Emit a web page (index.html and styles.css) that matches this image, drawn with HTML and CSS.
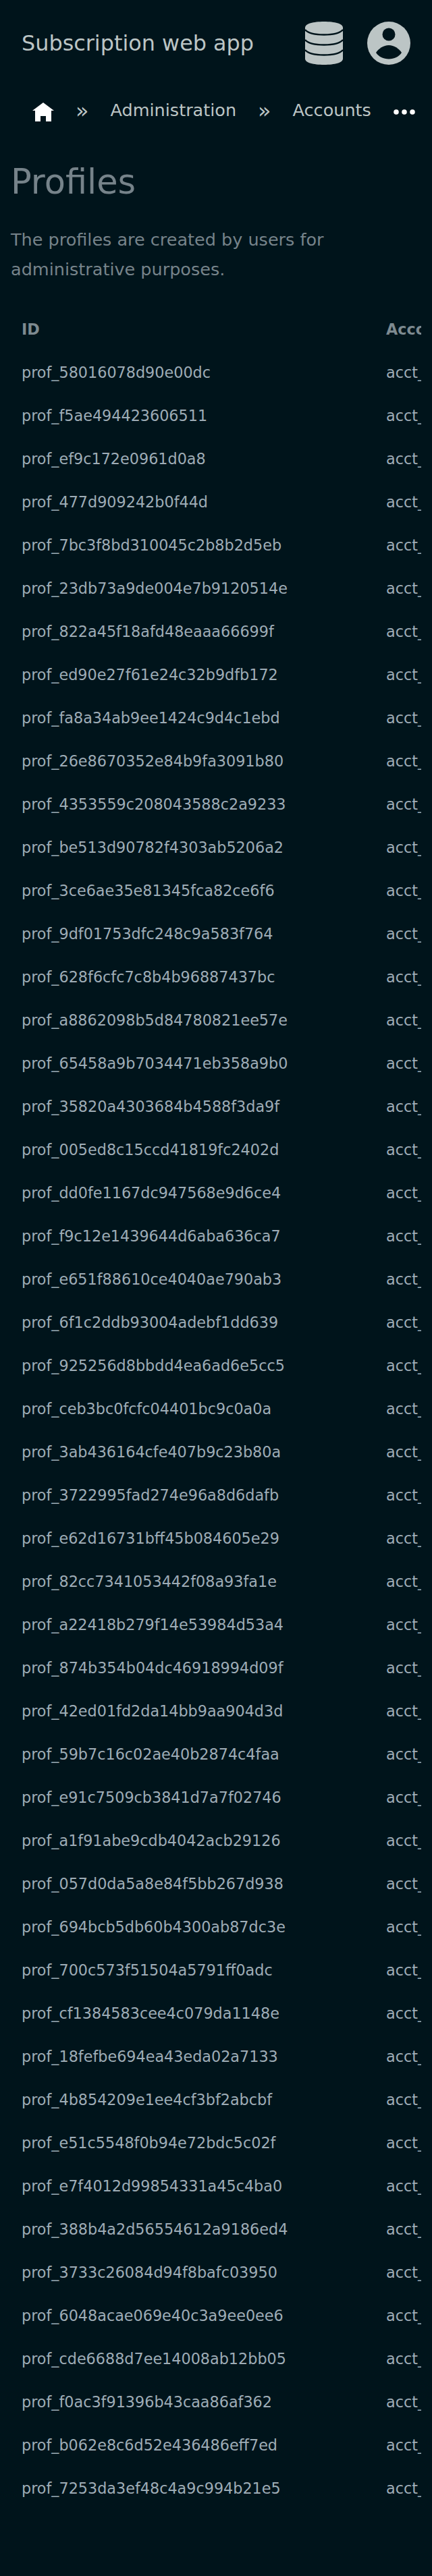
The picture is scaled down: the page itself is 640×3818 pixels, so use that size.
FILE: index.html
```html
<!DOCTYPE html>
<html lang="en">
<head>
  <meta charset="UTF-8" />
  <meta name="viewport" content="width=device-width, initial-scale=1" />
  <title>Profiles</title>
  <link rel="stylesheet" href="styles.css">
</head>
<body>
  <header class="topbar">
    <span class="brand">Subscription web app</span>
    <div class="topbar-icons">
      <svg class="icon-db" viewBox="0 0 56 64" aria-hidden="true">
        <path d="M0 9C0 3 12 0 28 0s28 3 28 9v46c0 6-12 9-28 9S0 61 0 55z" />
        <path class="band" d="M0 12c4 5 15 7.500 28 7.500S52 17 56 12M0 27c4 5 15 7.500 28 7.500S52 32 56 27M0 42c4 5 15 7.500 28 7.500S52 47 56 42" />
      </svg>
      <svg class="icon-user" viewBox="0 0 64 64" aria-hidden="true">
        <circle class="user-disc" cx="32" cy="32" r="32" />
        <circle class="user-cut" cx="32" cy="19" r="9.500" />
        <path class="user-cut" d="M13 46c4-6 11-11 19-11s15 5 19 11c-4 6-11 9.500-19 9.500S17 52 13 46z" />
      </svg>
    </div>
  </header>

  <nav class="crumbs">
    <svg class="icon-home" viewBox="0 0 8 8" aria-hidden="true">
      <path d="M4 0l-4 3h1v4h2v-2h2v2h2v-4.030l1 .030-4-3z" />
    </svg>
    <span class="crumb-sep">»</span>
    <a href="#">Administration</a>
    <span class="crumb-sep">»</span>
    <a href="#">Accounts</a>
    <svg class="icon-more" viewBox="0 0 32 8" aria-hidden="true">
      <circle cx="4" cy="4" r="3.800" />
      <circle cx="16" cy="4" r="3.800" />
      <circle cx="28" cy="4" r="3.800" />
    </svg>
  </nav>

  <main class="content">
    <h1>Profiles</h1>
    <p class="lead">The profiles are created by users for administrative purposes.</p>

    <div class="table-wrap">
      <table>
        <thead>
          <tr><th>ID</th><th>Account</th></tr>
        </thead>
        <tbody>
          <tr><td>prof_58016078d90e00dc</td><td>acct_</td></tr>
          <tr><td>prof_f5ae494423606511</td><td>acct_</td></tr>
          <tr><td>prof_ef9c172e0961d0a8</td><td>acct_</td></tr>
          <tr><td>prof_477d909242b0f44d</td><td>acct_</td></tr>
          <tr><td>prof_7bc3f8bd310045c2b8b2d5eb</td><td>acct_</td></tr>
          <tr><td>prof_23db73a9de004e7b9120514e</td><td>acct_</td></tr>
          <tr><td>prof_822a45f18afd48eaaa66699f</td><td>acct_</td></tr>
          <tr><td>prof_ed90e27f61e24c32b9dfb172</td><td>acct_</td></tr>
          <tr><td>prof_fa8a34ab9ee1424c9d4c1ebd</td><td>acct_</td></tr>
          <tr><td>prof_26e8670352e84b9fa3091b80</td><td>acct_</td></tr>
          <tr><td>prof_4353559c208043588c2a9233</td><td>acct_</td></tr>
          <tr><td>prof_be513d90782f4303ab5206a2</td><td>acct_</td></tr>
          <tr><td>prof_3ce6ae35e81345fca82ce6f6</td><td>acct_</td></tr>
          <tr><td>prof_9df01753dfc248c9a583f764</td><td>acct_</td></tr>
          <tr><td>prof_628f6cfc7c8b4b96887437bc</td><td>acct_</td></tr>
          <tr><td>prof_a8862098b5d84780821ee57e</td><td>acct_</td></tr>
          <tr><td>prof_65458a9b7034471eb358a9b0</td><td>acct_</td></tr>
          <tr><td>prof_35820a4303684b4588f3da9f</td><td>acct_</td></tr>
          <tr><td>prof_005ed8c15ccd41819fc2402d</td><td>acct_</td></tr>
          <tr><td>prof_dd0fe1167dc947568e9d6ce4</td><td>acct_</td></tr>
          <tr><td>prof_f9c12e1439644d6aba636ca7</td><td>acct_</td></tr>
          <tr><td>prof_e651f88610ce4040ae790ab3</td><td>acct_</td></tr>
          <tr><td>prof_6f1c2ddb93004adebf1dd639</td><td>acct_</td></tr>
          <tr><td>prof_925256d8bbdd4ea6ad6e5cc5</td><td>acct_</td></tr>
          <tr><td>prof_ceb3bc0fcfc04401bc9c0a0a</td><td>acct_</td></tr>
          <tr><td>prof_3ab436164cfe407b9c23b80a</td><td>acct_</td></tr>
          <tr><td>prof_3722995fad274e96a8d6dafb</td><td>acct_</td></tr>
          <tr><td>prof_e62d16731bff45b084605e29</td><td>acct_</td></tr>
          <tr><td>prof_82cc7341053442f08a93fa1e</td><td>acct_</td></tr>
          <tr><td>prof_a22418b279f14e53984d53a4</td><td>acct_</td></tr>
          <tr><td>prof_874b354b04dc46918994d09f</td><td>acct_</td></tr>
          <tr><td>prof_42ed01fd2da14bb9aa904d3d</td><td>acct_</td></tr>
          <tr><td>prof_59b7c16c02ae40b2874c4faa</td><td>acct_</td></tr>
          <tr><td>prof_e91c7509cb3841d7a7f02746</td><td>acct_</td></tr>
          <tr><td>prof_a1f91abe9cdb4042acb29126</td><td>acct_</td></tr>
          <tr><td>prof_057d0da5a8e84f5bb267d938</td><td>acct_</td></tr>
          <tr><td>prof_694bcb5db60b4300ab87dc3e</td><td>acct_</td></tr>
          <tr><td>prof_700c573f51504a5791ff0adc</td><td>acct_</td></tr>
          <tr><td>prof_cf1384583cee4c079da1148e</td><td>acct_</td></tr>
          <tr><td>prof_18fefbe694ea43eda02a7133</td><td>acct_</td></tr>
          <tr><td>prof_4b854209e1ee4cf3bf2abcbf</td><td>acct_</td></tr>
          <tr><td>prof_e51c5548f0b94e72bdc5c02f</td><td>acct_</td></tr>
          <tr><td>prof_e7f4012d99854331a45c4ba0</td><td>acct_</td></tr>
          <tr><td>prof_388b4a2d56554612a9186ed4</td><td>acct_</td></tr>
          <tr><td>prof_3733c26084d94f8bafc03950</td><td>acct_</td></tr>
          <tr><td>prof_6048acae069e40c3a9ee0ee6</td><td>acct_</td></tr>
          <tr><td>prof_cde6688d7ee14008ab12bb05</td><td>acct_</td></tr>
          <tr><td>prof_f0ac3f91396b43caa86af362</td><td>acct_</td></tr>
          <tr><td>prof_b062e8c6d52e436486eff7ed</td><td>acct_</td></tr>
          <tr><td>prof_7253da3ef48c4a9c994b21e5</td><td>acct_</td></tr>
        </tbody>
      </table>
    </div>
  </main>
</body>
</html>
```

FILE: styles.css
```css
html {
  background: #00141b;
}
body {
  margin: 0;
  background: #00141b;
  color: #9eacb6;
  font-family: "DejaVu Sans", sans-serif;
  font-size: 25.500px;
}
.topbar {
  display: flex;
  justify-content: space-between;
  align-items: center;
  padding: 32px;
}
.brand {
  color: #bcc5c5;
  font-size: 31.875px;
}
.topbar-icons {
  display: flex;
  align-items: center;
  gap: 36px;
}
.icon-db {
  display: block;
  width: 56px;
  height: 64px;
  fill: #bcc5c5;
}
.icon-db .band {
  fill: none;
  stroke: #00141b;
  stroke-width: 2.500;
}
.icon-user {
  display: block;
  width: 64px;
  height: 64px;
}
.user-disc {
  fill: #bcc5c5;
}
.user-cut {
  fill: #00141b;
}
.crumbs {
  display: flex;
  align-items: flex-start;
  gap: 32px;
  height: 36px;
  padding: 20px 24px 0 48px;
  color: #bcc5c5;
}
.crumbs a {
  color: #bcc5c5;
  text-decoration: none;
}
.crumb-sep {
  margin-top: -3px;
  font-size: 31.875px;
}
.icon-home {
  display: block;
  width: 32px;
  height: 32px;
  margin-top: 4px;
  fill: #ffffff;
}
.icon-more {
  display: block;
  width: 32px;
  height: 8px;
  margin: 14px 0 0 1px;
  fill: #ffffff;
}
.content {
  padding: 0 16px 98px;
}
h1 {
  margin: 56px 0 0;
  color: #76838a;
  font-size: 51px;
  font-weight: 400;
  line-height: 60px;
}
.lead {
  margin: 33px 0 35px;
  color: #76838a;
  line-height: 44px;
}
.table-wrap {
  overflow: hidden;
}
table {
  width: 900px;
  border-collapse: collapse;
  table-layout: fixed;
  font-size: 22.312px;
}
th,
td {
  height: 64px;
  padding: 0 16px;
  text-align: left;
  white-space: nowrap;
}
th {
  color: #7d8a90;
}
th:first-child,
td:first-child {
  width: 508px;
}
```
